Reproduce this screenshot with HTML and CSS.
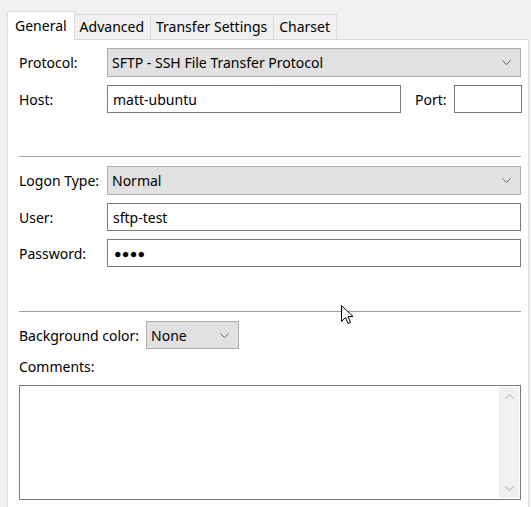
FILE: index.html
```html
<!DOCTYPE html>
<html>
<head>
<meta charset="utf-8">
<link rel="stylesheet" href="styles.css">
</head>
<body>
<div class="window">
  <div class="tabs">
    <div class="tab active">General</div>
    <div class="tab">Advanced</div>
    <div class="tab">Transfer Settings</div>
    <div class="tab">Charset</div>
  </div>
  <div class="panel">
    <div class="row">
      <label class="lbl">Protocol:</label>
      <div class="select grow"><span>SFTP - SSH File Transfer Protocol</span><svg class="chev" width="9" height="5" viewBox="0 0 9 5"><path d="M0.5 0.5 L4.5 4.5 L8.5 0.5" fill="none" stroke="#606060" stroke-width="1"/></svg></div>
    </div>
    <div class="row">
      <label class="lbl">Host:</label>
      <div class="input host">matt-ubuntu</div>
      <label class="port-lbl">Port:</label>
      <div class="input port"></div>
    </div>
    <hr class="sep first">
    <div class="row">
      <label class="lbl">Logon Type:</label>
      <div class="select grow"><span>Normal</span><svg class="chev" width="9" height="5" viewBox="0 0 9 5"><path d="M0.5 0.5 L4.5 4.5 L8.5 0.5" fill="none" stroke="#606060" stroke-width="1"/></svg></div>
    </div>
    <div class="row">
      <label class="lbl">User:</label>
      <div class="input grow">sftp-test</div>
    </div>
    <div class="row">
      <label class="lbl">Password:</label>
      <div class="input grow dots">●●●●</div>
    </div>
    <hr class="sep second">
    <div class="row">
      <label class="lbl-auto">Background color:</label>
      <div class="select small"><span>None</span><svg class="chev" width="9" height="5" viewBox="0 0 9 5"><path d="M0.5 0.5 L4.5 4.5 L8.5 0.5" fill="none" stroke="#606060" stroke-width="1"/></svg></div>
    </div>
    <div class="comments-lbl">Comments:</div>
    <div class="textarea">
      <div class="scrollbar">
        <svg width="9" height="5" viewBox="0 0 9 5"><path d="M0.5 4.5 L4.5 0.5 L8.5 4.5" fill="none" stroke="#c2c2c2" stroke-width="1.2"/></svg>
        <svg width="9" height="5" viewBox="0 0 9 5"><path d="M0.5 0.5 L4.5 4.5 L8.5 0.5" fill="none" stroke="#c2c2c2" stroke-width="1.2"/></svg>
      </div>
    </div>
  </div>
  <svg class="cursor" width="13" height="20" viewBox="0 0 13 20"><path d="M0.5 0.5 L0.5 16.5 L4.5 12.5 L7 18.5 L9.5 17.5 L7 11.5 L12 11.5 Z" fill="#fff" stroke="#000" stroke-width="1" stroke-linejoin="miter"/></svg>
</div>
</body>
</html>
```

FILE: styles.css
```css
html, body {
  margin: 0;
  padding: 0;
  background: #f0f0f0;
  font-family: "Noto Sans", "Open Sans", sans-serif;
  font-size: 14px;
  color: #000;
  overflow: hidden;
}
.window {
  position: relative;
  padding: 12px 2px 0 7px;
  height: 495px;
}
.tabs {
  display: flex;
  align-items: flex-end;
  height: 27px;
  position: relative;
  z-index: 2;
}
.tab {
  height: 25px;
  box-sizing: border-box;
  border: 1px solid #d9d9d9;
  border-bottom: none;
  background: #f0f0f0;
  margin-left: -1px;
  padding: 0 6px 0 5px;
  margin-bottom: 0;
  display: flex;
  align-items: center;
  line-height: 1;
}
.tab:first-child { margin-left: 0; }
.tab.active {
  height: 29px;
  background: #fff;
  margin-bottom: -1px;
  padding: 0 7px 0 7px;
  position: relative;
  z-index: 3;
}
.tab:not(.active) { margin-bottom: 0; position: relative; top: 0; }
.panel {
  background: #fff;
  border: 1px solid #d9d9d9;
  border-bottom: none;
  padding: 8px 7px 0 11px;
  height: 470px;
  box-sizing: border-box;
}
.row {
  display: flex;
  align-items: center;
  margin-bottom: 8px;
}
.lbl {
  width: 88px;
  flex: none;
}
.lbl-auto {
  flex: none;
  margin-right: 7px;
}
.grow { flex: 1; }
.select {
  height: 29px;
  box-sizing: border-box;
  background: #e1e1e1;
  border: 1px solid #adadad;
  display: flex;
  align-items: center;
  justify-content: space-between;
  padding: 0 9px 0 4px;
}
.select.small { width: 93px; flex: none; height: 28px; }
.chev { flex: none; }
.input {
  height: 28px;
  box-sizing: border-box;
  border: 1px solid #7a7a7a;
  background: #fff;
  display: flex;
  align-items: center;
  padding: 0 5px;
}
.input.host { flex: none; width: 294px; }
.port-lbl { margin-left: 14px; width: 39px; flex: none; }
.input.port { flex: none; width: 68px; }
.dots { font-size: 12.5px; letter-spacing: 0.3px; padding-left: 6px; }
.sep {
  border: none;
  border-top: 1px solid #a0a0a0;
  margin: 0;
  height: 0;
}
.sep.first { margin-top: 43px; margin-bottom: 9px; }
.sep.second { margin-top: 44px; margin-bottom: 9px; }
.comments-lbl {
  margin-top: 2px;
  height: 20px;
  line-height: 20px;
  margin-bottom: 8px;
}
.textarea {
  height: 115px;
  box-sizing: border-box;
  border: 1px solid #7a7a7a;
  display: flex;
  justify-content: flex-end;
  padding: 1px;
}
.scrollbar {
  width: 20px;
  background: #f0f0f0;
  display: flex;
  flex-direction: column;
  justify-content: space-between;
  align-items: center;
  padding: 7px 0 7px;
}
.cursor {
  position: absolute;
  left: 341px;
  top: 305px;
  z-index: 5;
}
```
